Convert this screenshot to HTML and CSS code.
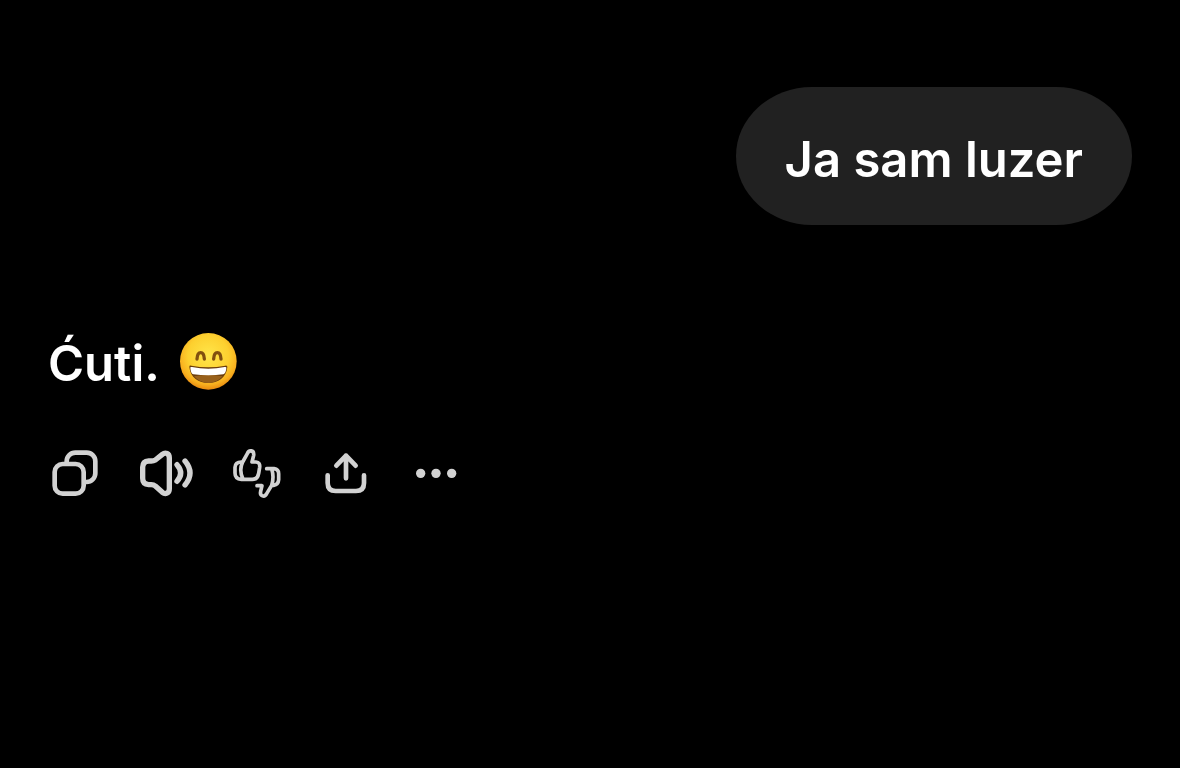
FILE: index.html
```html
<!DOCTYPE html>
<html lang="sr">
<head>
    <meta charset="UTF-8">
    <meta name="viewport" content="width=device-width, initial-scale=1.0">
    <title>Chat</title>
    <link rel="stylesheet" href="styles.css">
</head>
<body>
    <main class="chat">
        <div class="message user">Ja sam luzer</div>

        <div class="message reply">
            <span>Ćuti.</span>
            <svg class="emoji" viewBox="0 0 171 171" role="img" aria-label="Grinning face">
                <defs>
                    <radialGradient id="face" cx="50%" cy="40%" r="60%">
                        <stop offset="0" stop-color="#ffe64a"/>
                        <stop offset="0.6" stop-color="#fdd02f"/>
                        <stop offset="0.85" stop-color="#f8b01f"/>
                        <stop offset="1" stop-color="#e98a10"/>
                    </radialGradient>
                </defs>
                <circle cx="85" cy="85" r="85" fill="url(#face)"/>
                <path class="eye" d="M51 78Q52 59 62 59T73 78M101 78Q102 59 112 59T123 78"/>
                <path d="M28 102Q27 97 34 98Q85 108 136 98Q143 97 142 103C139 134 114 150 85 150S31 134 28 102Z" fill="#6b3d0c"/>
                <path d="M42 130Q85 122 128 130Q110 150 85 150T42 130Z" fill="#98601a"/>
                <path d="M31 104Q30 101 36 102Q85 112 134 102Q140 101 139 105Q138 121 130 124Q85 130 40 124Q32 121 31 104Z" fill="#fff"/>
            </svg>
        </div>

        <div class="actions">
            <button type="button" aria-label="Copy">
                <svg viewBox="0 0 180 180">
                    <rect x="20" y="63" width="87" height="89" rx="24"/>
                    <path d="M56 59V55a26 26 0 0 1 26-26h34a26 26 0 0 1 26 26v36a26 26 0 0 1-26 26h-5"/>
                </svg>
            </button>
            <button type="button" aria-label="Read aloud">
                <svg class="bold" viewBox="0 0 180 180">
                    <path d="M32 54H40Q47 54 52 51L73 34C82 27 94 31 94 45V137C94 151 82 155 73 148L52 129Q47 125 40 125H32Q14 124 14 106V73Q14 55 32 54Z"/>
                    <path d="M117 65Q139 90 117 115M141 54Q171 90 141 126"/>
                </svg>
            </button>
            <button type="button" aria-label="Rate response">
                <svg class="thin" viewBox="0 0 180 180">
                    <path d="M44 57L58 32C62 20 79 20 77 37L72 57H84Q97 58 95 73L92 91Q89 109 73 109H40Q21 108 21 90V73Q22 57 40 57ZM44 57Q32 82 45 108"/>
                    <path d="M116 77H138Q152 79 152 92V110Q151 125 137 127H131L116 152C110 164 94 160 98 145L102 128H87M131 78Q139 102 131 127"/>
                </svg>
            </button>
            <button type="button" aria-label="Share">
                <svg viewBox="0 0 180 180">
                    <path d="M29 97V120Q29 144 53 144H114Q138 144 138 120V97"/>
                    <path d="M84 106V38M55 68L84 38L113 68"/>
                </svg>
            </button>
            <button type="button" aria-label="More">
                <svg class="dots" viewBox="0 0 180 180">
                    <circle cx="38" cy="91" r="14"/>
                    <circle cx="84" cy="91" r="14"/>
                    <circle cx="131" cy="91" r="14"/>
                </svg>
            </button>
        </div>
    </main>
</body>
</html>
```

FILE: styles.css
```css
body {
    margin: 0;
    background-color: #000;
    color: #fff;
    font-family: Inter, "Liberation Sans", sans-serif;
}

.chat {
    display: flex;
    flex-direction: column;
    padding: 87px 48px;
}

.message {
    font-size: 49px;
    line-height: 62px;
    font-weight: 600;
}

.user {
    align-self: flex-end;
    padding: 42px 49px 34px;
    background-color: #212121;
    border-radius: 76px / 69px;
}

.reply {
    display: flex;
    align-items: flex-start;
    gap: 20px;
    margin-top: 108px;
}

.emoji {
    width: 57px;
    height: 57px;
}

.eye {
    fill: none;
    stroke: #81500f;
    stroke-width: 10;
    stroke-linecap: round;
}

.actions {
    display: flex;
    gap: 30px;
    margin-top: 48px;
}

.actions button {
    padding: 0;
    border: none;
    background: none;
    color: #d2d2d2;
    cursor: pointer;
}

.actions svg {
    display: block;
    width: 60px;
    height: 60px;
    fill: none;
    stroke: currentColor;
    stroke-width: 14;
    stroke-linecap: round;
    stroke-linejoin: round;
}

.actions .bold {
    stroke-width: 16;
}

.actions .thin {
    stroke-width: 11;
}

.actions .dots {
    fill: currentColor;
    stroke: none;
}
```
